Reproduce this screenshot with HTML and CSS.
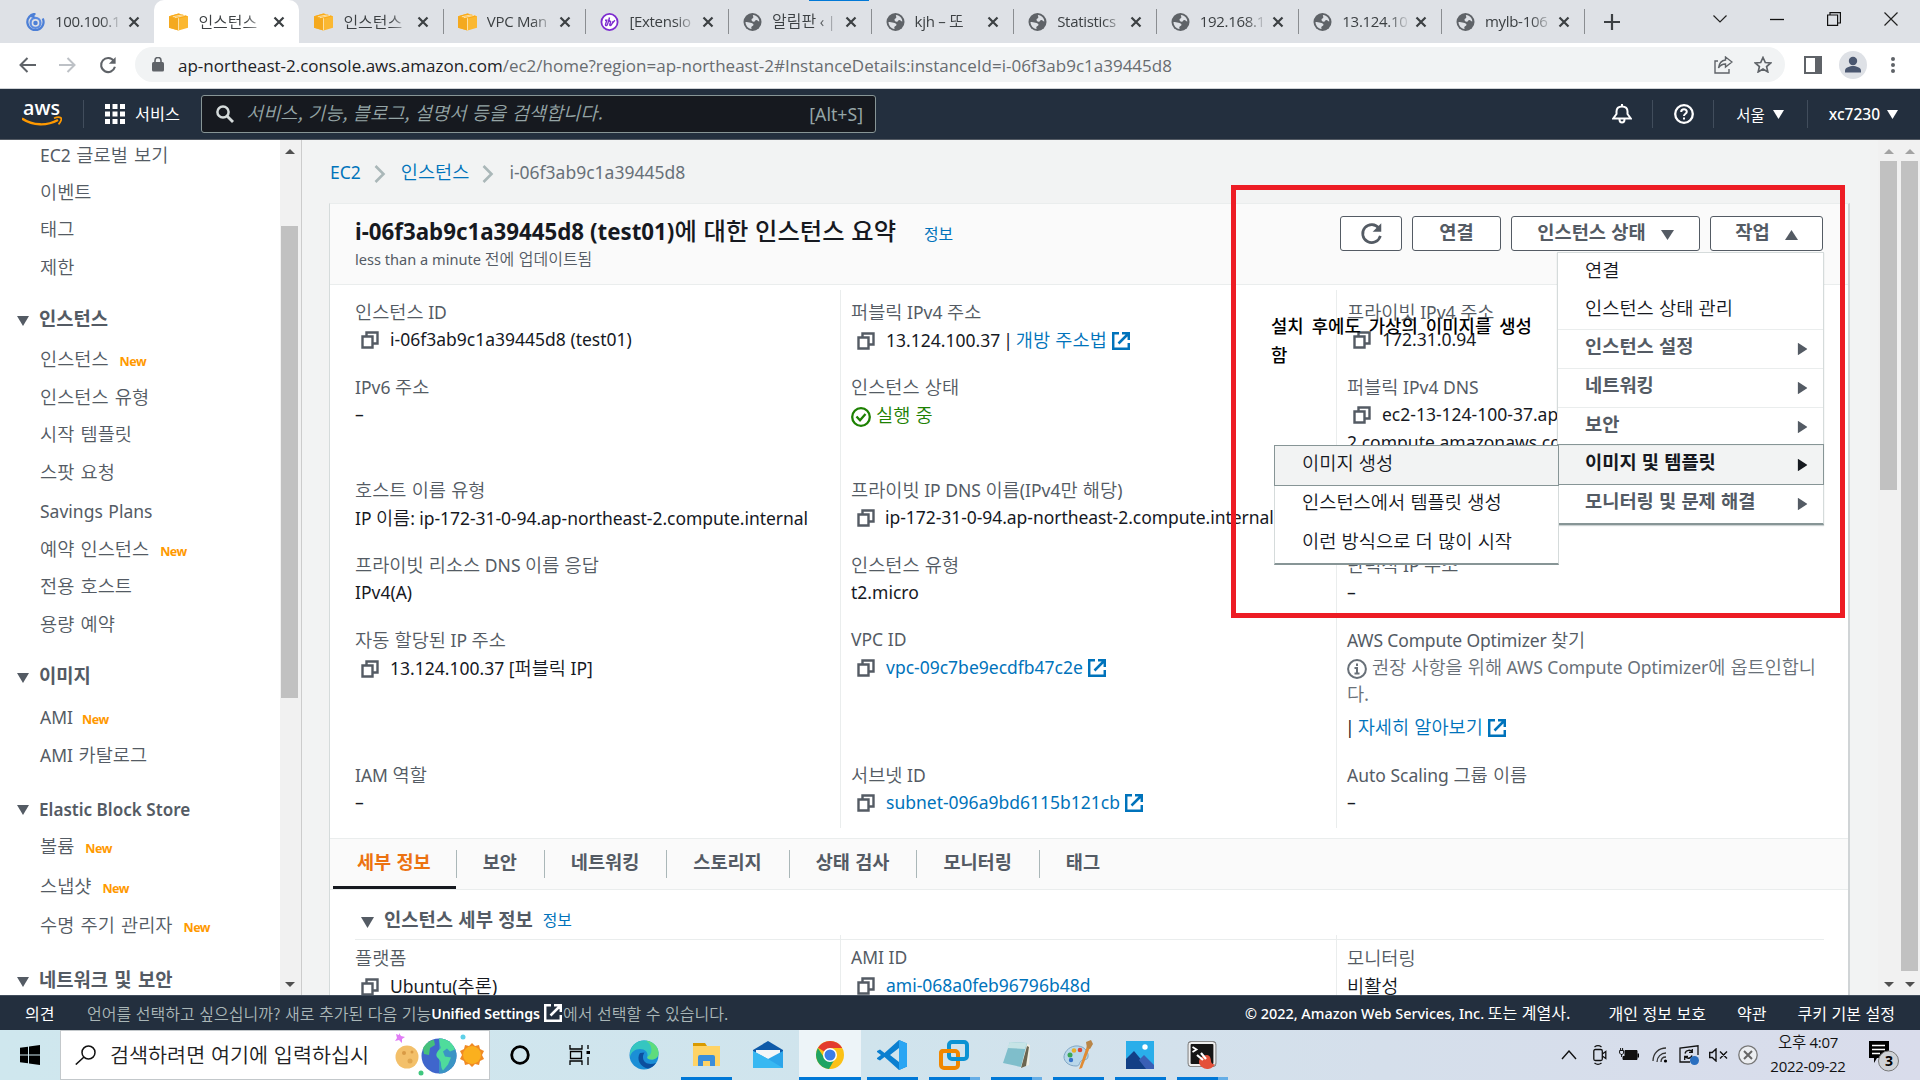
FILE: index.html
```html
<!DOCTYPE html>
<html lang="ko">
<head>
<meta charset="utf-8">
<title>인스턴스 세부 정보 | EC2 Management Console</title>
<link rel="stylesheet" href="styles.css">
</head>
<body>
<svg class="defs" width="0" height="0">
  <symbol id="copy" viewBox="0 0 18 18"><path d="M1.5 5.5h10v11h-10z M5.5 5V1.5h11v11H12" fill="none" stroke="currentColor" stroke-width="2.4"/></symbol>
  <symbol id="ext" viewBox="0 0 18 18"><path d="M7 1.2H1.2v15.6h15.6V11 M10 1.2h6.8V8 M16.5 1.5L6.5 11.5" fill="none" stroke="currentColor" stroke-width="2.5"/></symbol>
  <symbol id="close" viewBox="0 0 12 12"><path d="M1.5 1.5l9 9M10.5 1.5l-9 9" stroke="currentColor" stroke-width="2.2"/></symbol>
  <symbol id="cube" viewBox="0 0 20 18"><path d="M0 3L10 0l10 3v12l-10 3L0 15z" fill="#fbb832"/><path d="M0 3l10 2v13L0 15z" fill="#f4a91f"/><path d="M0 3l10-3 10 3-10 2.5z" fill="#fbab18"/><path d="M10 5v13M4 3.500l10-2M6 4.500l11-2.500" stroke="#fde3ab" stroke-width="1"/></symbol>
  <symbol id="globe" viewBox="0 0 18 18"><circle cx="9" cy="9" r="9" fill="#5f6368"/><path d="M9.500 2c4 .5 6.300 3.500 6.300 6.500-1.500 0-1.500-1.500-3-1.500s-1 1.800-2.600 1.800S8 7.500 8 6.500s1.500-.8 1.800-2S9 3 9.500 2zM2 9c1.500 0 3.500.2 5 .8s3 .5 3 2-2 1.200-2.200 2.400.7 1.500.2 1.800C4.500 15.500 2 12.500 2 9z" fill="#dee1e6"/></symbol>
  <symbol id="down" viewBox="0 0 12 10" preserveAspectRatio="none"><path d="M0 0h12L6 10z" fill="currentColor"/></symbol>
  <symbol id="reload" viewBox="0 0 20 20"><path d="M16.500 5.500A7.800 7.800 0 1 0 17.700 12" fill="none" stroke="currentColor" stroke-width="2.3"/><path d="M18.500 1v7.500H11z" fill="currentColor"/></symbol>
  <symbol id="chev" viewBox="0 0 12 18"><path d="M1.500 1L9.500 9l-8 8" fill="none" stroke="#aab7b8" stroke-width="2.600"/></symbol>
</svg>

<div class="tabstrip">
  <div class="tab"><svg class="fav" viewBox="0 0 20 20"><path d="M10 1a9 9 0 1 0 8 5" fill="none" stroke="#4c7fd6" stroke-width="2.500"/><circle cx="10" cy="11" r="5.500" fill="none" stroke="#5b8be0" stroke-width="2.500"/><circle cx="10" cy="11" r="2.500" fill="#4c7fd6"/><path d="M3 4l6-3v5z" fill="#4c7fd6"/></svg><span class="tt">100.100.1</span><svg class="x"><use href="#close"/></svg></div>
  <div class="tab on"><svg class="fav"><use href="#cube"/></svg><span class="tt k">인스턴스</span><svg class="x"><use href="#close"/></svg></div>
  <div class="tab"><svg class="fav"><use href="#cube"/></svg><span class="tt k">인스턴스</span><svg class="x"><use href="#close"/></svg></div>
  <div class="tab s"><svg class="fav"><use href="#cube"/></svg><span class="tt">VPC Man</span><svg class="x"><use href="#close"/></svg></div>
  <div class="tab s"><svg class="fav" viewBox="0 0 20 20"><circle cx="10" cy="10" r="9" fill="#fff" stroke="#7d2ccf" stroke-width="2"/><path d="M5 8l2 0-1.500 5c0 2 2 1 2.500-1l2-7-1 5c1-2 3-1 2 1s-1 3 0 3 2-2 3-5M11 14l5-6" fill="none" stroke="#7d2ccf" stroke-width="1.500"/></svg><span class="tt">[Extensio</span><svg class="x"><use href="#close"/></svg></div>
  <div class="tab s"><svg class="fav"><use href="#globe"/></svg><span class="tt"><span class="k">알림판</span> ‹ |</span><svg class="x"><use href="#close"/></svg></div>
  <div class="tab s"><svg class="fav"><use href="#globe"/></svg><span class="tt">kjh – <span class="k">또</span></span><svg class="x"><use href="#close"/></svg></div>
  <div class="tab s"><svg class="fav"><use href="#globe"/></svg><span class="tt">Statistics</span><svg class="x"><use href="#close"/></svg></div>
  <div class="tab s"><svg class="fav"><use href="#globe"/></svg><span class="tt">192.168.1</span><svg class="x"><use href="#close"/></svg></div>
  <div class="tab s"><svg class="fav"><use href="#globe"/></svg><span class="tt">13.124.10</span><svg class="x"><use href="#close"/></svg></div>
  <div class="tab s"><svg class="fav"><use href="#globe"/></svg><span class="tt">mylb-106</span><svg class="x"><use href="#close"/></svg></div>
  <div class="newtab s"><svg width="16" height="16" viewBox="0 0 16 16"><path d="M8 0v16M0 8h16" stroke="#3c4043" stroke-width="2.200"/></svg></div>
  <div class="winbtns">
    <svg width="14" height="8" viewBox="0 0 14 8"><path d="M.5.5L7 7 13.500.5" fill="none" stroke="#222" stroke-width="1.200"/></svg>
    <svg width="14" height="8" viewBox="0 0 14 8"><path d="M0 4.500h14" stroke="#111" stroke-width="1.300"/></svg>
    <svg width="14" height="14" viewBox="0 0 14 14"><path d="M.6 3h10v10.400H.6zM3 3V.6h10.400V11h-2.600" fill="none" stroke="#111" stroke-width="1.200"/></svg>
    <svg width="14" height="14" viewBox="0 0 14 14"><path d="M.5.5l13 13M13.500.5l-13 13" stroke="#222" stroke-width="1.200"/></svg>
  </div>
  <div class="drag"></div>
</div>

<div class="toolbar">
  <svg class="ti back" viewBox="0 0 17 16"><path d="M17 8H2M8.500 1L1.500 8l7 7" fill="none" stroke="#5f6368" stroke-width="2"/></svg>
  <svg class="ti fwd" viewBox="0 0 17 16"><path d="M0 8h15M8.500 1l7 7-7 7" fill="none" stroke="#bdc1c6" stroke-width="2"/></svg>
  <svg class="ti rel"><use href="#reload"/></svg>
  <div class="omni">
    <svg width="12" height="15" viewBox="0 0 12 15"><rect y="5" width="12" height="9.500" rx="1.500" fill="#5f6368"/><path d="M3 6V3.500a3 3 0 0 1 6 0V6" fill="none" stroke="#5f6368" stroke-width="1.600"/></svg>
    <span class="url">ap-northeast-2.console.aws.amazon.com<span class="path">/ec2/home?region=ap-northeast-2#InstanceDetails:instanceId=i-06f3ab9c1a39445d8</span></span>
    <svg class="share" width="19" height="18" viewBox="0 0 19 18"><path d="M4 5H1v12h14v-4M11.500 1l6.500 5-6.500 5V8C8 8 6 9.500 4.500 12 5 8 7 4.500 11.500 4z" fill="none" stroke="#5f6368" stroke-width="1.400"/></svg>
    <svg width="18" height="17" viewBox="0 0 18 17"><path d="M9 1.500l2.300 5 5.400.5-4.100 3.600 1.200 5.300L9 13.100l-4.800 2.800 1.200-5.300L1.300 7l5.400-.5z" fill="none" stroke="#5f6368" stroke-width="1.700"/></svg>
  </div>
  <svg class="panel" width="18" height="18" viewBox="0 0 18 18"><path d="M1 1h16v16H1z" fill="#fff" stroke="#5f6368" stroke-width="2"/><path d="M11 1h6v16h-6z" fill="#5f6368"/></svg>
  <svg class="avatar" width="28" height="28" viewBox="0 0 28 28"><circle cx="14" cy="14" r="14" fill="#dee1e6"/><circle cx="14" cy="10" r="4.200" fill="#4a5770"/><path d="M6 21.500v-2c0-3 5-4.500 8-4.500s8 1.500 8 4.500v2z" fill="#4a5770"/></svg>
  <svg class="dots" width="4" height="16" viewBox="0 0 4 16"><g fill="#5f6368"><circle cx="2" cy="2" r="2"/><circle cx="2" cy="8" r="2"/><circle cx="2" cy="14" r="2"/></g></svg>
</div>

<header class="aws">
  <svg class="logo" width="40" height="26" viewBox="0 0 40 26"><text x="1" y="14" textLength="37" lengthAdjust="spacingAndGlyphs" class="logotext">aws</text><path d="M0 17.500c11 7.500 25 7.500 36 1.500" fill="none" stroke="#f90" stroke-width="2.400"/><path d="M32 17.200c3-1.200 6-1 7-.2s-.3 4-2.500 6.300" fill="none" stroke="#f90" stroke-width="1.700"/></svg>
  <i class="sep s1"></i>
  <svg class="gridic" width="20" height="20" viewBox="0 0 20 20"><path d="M0 0h5v5H0zM7.500 0h5v5h-5zM15 0h5v5h-5zM0 7.500h5v5H0zM7.500 7.500h5v5h-5zM15 7.500h5v5h-5zM0 15h5v5H0zM7.500 15h5v5h-5zM15 15h5v5h-5z" fill="#fff"/></svg>
  <span class="svc k">서비스</span>
  <div class="search"><svg width="18" height="18" viewBox="0 0 18 18"><circle cx="7" cy="7" r="5.600" fill="none" stroke="#d5dbdb" stroke-width="2.500"/><path d="M11 11l6 6" stroke="#d5dbdb" stroke-width="2.800"/></svg><span class="ph k">서비스, 기능, 블로그, 설명서 등을 검색합니다.</span><span class="alt">[Alt+S]</span></div>
  <svg class="bell" width="20" height="20" viewBox="0 0 20 20"><path d="M1.200 14.500h17.600L15.500 10V7.500c0-3-2-5-5.500-5s-5.500 2-5.500 5V10zM7.500 15.500c0 4 5 4 5 0M10 0v3" fill="none" stroke="#fff" stroke-width="2"/></svg>
  <i class="sep"></i>
  <svg class="help" width="20" height="20" viewBox="0 0 20 20"><circle cx="10" cy="10" r="8.800" fill="none" stroke="#fff" stroke-width="2.300"/><path d="M7.200 8c0-3.500 5.600-3.500 5.600-.3 0 2-2.800 2-2.800 4.300M10 13.500v2" fill="none" stroke="#fff" stroke-width="2"/></svg>
  <i class="sep"></i>
  <span class="reg k">서울</span><svg class="tri"><use href="#down"/></svg>
  <i class="sep s2"></i>
  <span class="usr">xc7230</span><svg class="tri t2"><use href="#down"/></svg>
</header>

<div class="work">
  <nav class="side">
    <a>EC2 <span class="k">글로벌 보기</span></a>
    <a class="k">이벤트</a>
    <a class="k">태그</a>
    <a class="k">제한</a>
    <h4 class="k"><svg><use href="#down"/></svg>인스턴스</h4>
    <a class="t"><span class="k">인스턴스</span><em>New</em></a>
    <a class="k">인스턴스 유형</a>
    <a class="k">시작 템플릿</a>
    <a class="k">스팟 요청</a>
    <a class="lat">Savings Plans</a>
    <a class="t"><span class="k">예약 인스턴스</span><em>New</em></a>
    <a class="k">전용 호스트</a>
    <a class="k">용량 예약</a>
    <h4 class="k"><svg><use href="#down"/></svg>이미지</h4>
    <a class="t lat">AMI<em>New</em></a>
    <a>AMI <span class="k">카탈로그</span></a>
    <h4 class="lat"><svg><use href="#down"/></svg>Elastic Block Store</h4>
    <a class="t"><span class="k">볼륨</span><em>New</em></a>
    <a class="t"><span class="k">스냅샷</span><em>New</em></a>
    <a class="t"><span class="k">수명 주기 관리자</span><em>New</em></a>
    <h4 class="k end"><svg><use href="#down"/></svg>네트워크 및 보안</h4>
  </nav>
  <div class="sb sb1"><svg class="up"><use href="#down"/></svg><i></i><svg><use href="#down"/></svg></div>

  <main>
    <div class="crumbs"><a>EC2</a><svg><use href="#chev"/></svg><a class="k">인스턴스</a><svg><use href="#chev"/></svg><span>i-06f3ab9c1a39445d8</span></div>
    <section class="card">
      <div class="chead">
        <div class="ttl">
          <h1>i-06f3ab9c1a39445d8 (test01)<span class="k">에 대한 인스턴스 요약</span><a class="k">정보</a></h1>
          <p>less than a minute <span class="k">전에 업데이트됨</span></p>
        </div>
        <div class="btns">
          <div class="btn b1"><svg width="23" height="23"><use href="#reload"/></svg></div>
          <div class="btn b2 k">연결</div>
          <div class="btn b3 k">인스턴스 상태<svg class="tr"><use href="#down"/></svg></div>
          <div class="btn b4 k">작업<svg class="tr flip"><use href="#down"/></svg></div>
          <div class="menu">
            <div class="mi k">연결</div>
            <div class="mi k">인스턴스 상태 관리</div>
            <div class="mi g k">인스턴스 설정<svg><use href="#down"/></svg></div>
            <div class="mi g k">네트워킹<svg><use href="#down"/></svg></div>
            <div class="mi g k">보안<svg><use href="#down"/></svg></div>
            <div class="mi g k hot">이미지 및 템플릿<svg><use href="#down"/></svg></div>
            <div class="mi g k last">모니터링 및 문제 해결<svg><use href="#down"/></svg></div>
            <div class="sub">
              <div class="mi k hot">이미지 생성</div>
              <div class="mi k">인스턴스에서 템플릿 생성</div>
              <div class="mi k">이런 방식으로 더 많이 시작</div>
            </div>
          </div>
        </div>
      </div>
      <div class="cols">
        <div class="col">
          <dl><dt><span class="k">인스턴스</span> ID</dt><dd><svg class="cp"><use href="#copy"/></svg>i-06f3ab9c1a39445d8 (test01)</dd></dl>
          <dl><dt>IPv6 <span class="k">주소</span></dt><dd>–</dd></dl>
          <dl><dt class="k">호스트 이름 유형</dt><dd class="n1">IP <span class="k">이름</span>: ip-172-31-0-94.ap-northeast-2.compute.internal</dd></dl>
          <dl><dt><span class="k">프라이빗 리소스</span> DNS <span class="k">이름 응답</span></dt><dd>IPv4(A)</dd></dl>
          <dl><dt><span class="k">자동 할당된</span> IP <span class="k">주소</span></dt><dd><svg class="cp"><use href="#copy"/></svg>13.124.100.37 [<span class="k">퍼블릭</span> IP]</dd></dl>
          <dl><dt>IAM <span class="k">역할</span></dt><dd>–</dd></dl>
        </div>
        <div class="col">
          <dl><dt><span class="k">퍼블릭</span> IPv4 <span class="k">주소</span></dt><dd><svg class="cp"><use href="#copy"/></svg>13.124.100.37<span class="bar">|</span><a><span class="k">개방 주소법</span><svg class="ex"><use href="#ext"/></svg></a></dd></dl>
          <dl><dt class="k">인스턴스 상태</dt><dd class="run"><svg class="ok" viewBox="0 0 20 20"><circle cx="10" cy="10" r="8.800" fill="none" stroke="#1d8102" stroke-width="2.300"/><path d="M5.500 9.500l3.500 3.800L14.500 7" fill="none" stroke="#1d8102" stroke-width="2.300"/></svg><span class="k">실행 중</span></dd></dl>
          <dl><dt><span class="k">프라이빗</span> IP DNS <span class="k">이름</span>(IPv4<span class="k">만 해당</span>)</dt><dd class="n1"><svg class="cp"><use href="#copy"/></svg>ip-172-31-0-94.ap-northeast-2.compute.internal</dd></dl>
          <dl><dt class="k">인스턴스 유형</dt><dd>t2.micro</dd></dl>
          <dl><dt>VPC ID</dt><dd><svg class="cp"><use href="#copy"/></svg><a>vpc-09c7be9ecdfb47c2e<svg class="ex"><use href="#ext"/></svg></a></dd></dl>
          <dl><dt><span class="k">서브넷</span> ID</dt><dd><svg class="cp"><use href="#copy"/></svg><a>subnet-096a9bd6115b121cb<svg class="ex"><use href="#ext"/></svg></a></dd></dl>
        </div>
        <div class="col">
          <dl><dt><span class="k">프라이빗</span> IPv4 <span class="k">주소</span></dt><dd><svg class="cp"><use href="#copy"/></svg>172.31.0.94</dd></dl>
          <dl><dt><span class="k">퍼블릭</span> IPv4 DNS</dt><dd><svg class="cp"><use href="#copy"/></svg>ec2-13-124-100-37.ap-northeast-<br>2.compute.amazonaws.com</dd></dl>
          <dl></dl>
          <dl><dt><span class="k">탄력적</span> IP <span class="k">주소</span></dt><dd>–</dd></dl>
          <dl><dt class="aco">AWS Compute Optimizer <span class="k">찾기</span></dt><dd class="opt"><svg class="ok" viewBox="0 0 20 20"><circle cx="10" cy="10" r="8.900" fill="none" stroke="#687078" stroke-width="2"/><path d="M10 4.500v2.500M7.500 9H10v5M7.500 14.500h5" fill="none" stroke="#687078" stroke-width="2"/></svg><span class="k">권장 사항을 위해</span> AWS Compute Optimizer<span class="k">에 옵트인합니<br>다.</span></dd><dd class="more"><span class="bar">|</span><a><span class="k">자세히 알아보기</span><svg class="ex"><use href="#ext"/></svg></a></dd></dl>
          <dl><dt>Auto Scaling <span class="k">그룹 이름</span></dt><dd>–</dd></dl>
        </div>
      </div>
      <div class="tabs k">
        <div class="on">세부 정보</div><div>보안</div><div>네트워킹</div><div>스토리지</div><div>상태 검사</div><div>모니터링</div><div>태그</div>
      </div>
      <div class="sec k"><svg><use href="#down"/></svg><b>인스턴스 세부 정보</b><a>정보</a></div>
      <div class="cols c2">
        <div class="col"><dl><dt class="k">플랫폼</dt><dd><svg class="cp"><use href="#copy"/></svg>Ubuntu(<span class="k">추론</span>)</dd></dl></div>
        <div class="col"><dl><dt>AMI ID</dt><dd><svg class="cp"><use href="#copy"/></svg><a>ami-068a0feb96796b48d</a></dd></dl></div>
        <div class="col"><dl><dt class="k">모니터링</dt><dd class="k">비활성</dd></dl></div>
      </div>
    </section>
  </main>
  <div class="sb sb2"><svg class="up"><use href="#down"/></svg><i></i><svg><use href="#down"/></svg></div>
  <div class="sb sb3"><svg class="up"><use href="#down"/></svg><i></i><svg><use href="#down"/></svg></div>
  <div class="mark"><p>설치 후에도 가상의 이미지를 생성함</p></div>
</div>

<footer class="foot">
  <span class="w k f1">의견</span>
  <span class="msg"><span class="k">언어를 선택하고 싶으십니까? 새로 추가된 다음 기능</span><b>Unified Settings</b><svg width="18" height="18"><use href="#ext"/></svg><span class="k">에서 선택할 수 있습니다.</span></span>
  <span class="w cr">© 2022, Amazon Web Services, Inc. <span class="k">또는 계열사.</span></span>
  <span class="w k p1">개인 정보 보호</span>
  <span class="w k p2">약관</span>
  <span class="w k p3">쿠키 기본 설정</span>
</footer>

<div class="taskbar">
  <svg class="win" width="20" height="20" viewBox="0 0 20 20"><path d="M0 2.800l8-1.100v7.700H0zM9 1.500L20 0v9.400H9zM0 10.500h8v7.800l-8-1.100zM9 10.500h11V20L9 18.400z" fill="#000"/></svg>
  <div class="tsearch">
    <svg width="21" height="20" viewBox="0 0 21 20"><circle cx="13.500" cy="7.500" r="6.500" fill="none" stroke="#111" stroke-width="1.500"/><path d="M9 12L.8 19.500" stroke="#111" stroke-width="1.600"/></svg>
    <span class="k">검색하려면 여기에 입력하십시</span>
    <svg class="planets" width="90" height="44" viewBox="0 0 90 44"><circle cx="12" cy="24" r="11.500" fill="#f3c06a"/><circle cx="9" cy="20" r="2" fill="#d99a45"/><circle cx="15" cy="28" r="2.500" fill="#e0a650"/><circle cx="17" cy="19" r="1.500" fill="#d99a45"/><circle cx="44" cy="23" r="17.500" fill="#3f66cc"/><path d="M44 5.500a17.500 17.500 0 0 1 0 35z" fill="#3a94c4"/><path d="M44 5.500c9 0 14 5 16 11l-5 2-3-3-4 3 2 5 6 1-3 7-5 6c-3-4-1-7-3-10s-5-4-3-8 5-3 3-7z" fill="#4fdc9c"/><path d="M28 15c3-5 7-8 11-8l1 5-5 3-1 7-5-1z" fill="#45c07c"/><path d="M77 10l3 3 4-1 1 4 4 2-2 4 2 4-4 2-1 4-4-1-3 3-3-3-4 1-1-4-4-2 2-4-2-4 4-2 1-4 4 1z" fill="#f08a24"/><circle cx="77" cy="22" r="9" fill="#fbb01e"/><path d="M4 0l2 3 4 1-3 2v4L4 7 0 8l2-3-1-4 3 1z" fill="#e07cf5"/><circle cx="68" cy="4" r="2.500" fill="#5ed0e8"/><circle cx="26" cy="40" r="2.500" fill="#3fc77e"/></svg>
  </div>
  <svg class="cort" width="20" height="20" viewBox="0 0 20 20"><circle cx="10" cy="10" r="8.300" fill="none" stroke="#000" stroke-width="2.800"/></svg>
  <svg class="tv" width="22" height="20" viewBox="0 0 22 20"><path d="M1 0v4h12V0M1 20v-4h12v4M1.500 6.500h11v7h-11zM19 0v4M19 12v8" fill="none" stroke="#000" stroke-width="1.300"/><path d="M17.500 6h3.500v3h-3.500z"/></svg>
  <div class="apps">
    <div><svg viewBox="0 0 30 30"><circle cx="15" cy="15" r="14.500" fill="#1b8fd6"/><path d="M1 12C3 4 9 .5 15 .5c9 0 14.500 6.500 14.500 12 0 5-3.500 7-7 7-4 0-5-1.500-4-3.500C19 12 16 9 11 9c-5 0-9 3-10 8z" fill="#35c6c0"/><path d="M17 .7c8 1 12.500 6.800 12.500 12 0 5-3.500 6.800-7 6.800-3 0-4.500-1-4-2.500 6-3 5-13-1.500-16.300z" fill="#5fdc7c"/><path d="M11 13c-4 6 0 14 8 15.500 3-.5 6-2.500 8-5.500-6 2-12 1-13-5-.3-2 .5-4 1.500-5.500z" fill="#0c4f9e"/></svg></div>
    <div class="r"><svg viewBox="0 0 30 30"><path d="M2 3h12l2 3H2z" fill="#d99a00"/><path d="M2 6h27v20H2z" fill="#ffd365"/><path d="M7 26v-9q0-2 2-2h13q2 0 2 2v9h-5v-5h-7v5z" fill="#3b8edb"/></svg></div>
    <div><svg viewBox="0 0 30 30"><path d="M0 10L15 1l15 9v5H0z" fill="#0f5aa8"/><path d="M3 10h24v9H3z" fill="#f4f6f8"/><path d="M0 11l15 8 15-8v17H0z" fill="#2ca5ea"/><path d="M0 11l15 8 15 9H0z" fill="#38b8f2"/></svg></div>
    <div class="r act"><svg viewBox="0 0 30 30"><circle cx="15" cy="15" r="14" fill="#fbc116"/><path d="M15 15L3 7.800A14 14 0 0 1 27.200 8H15z" fill="#e33b2e"/><path d="M2.900 8A14 14 0 0 0 14 29l6-10.500-11-1z" fill="#1fa463"/><circle cx="15" cy="15" r="7" fill="#fff"/><circle cx="15" cy="15" r="5.500" fill="#3b7de8"/></svg></div>
    <div class="r"><svg viewBox="0 0 30 30"><path d="M22 0l8 3.500v23L22 30 7.500 17 3 20.500 0 19v-1l4-3-4-3v-1l3-1.500L7.500 13zM22 8l-9 7 9 7z" fill="#0a7fd0" fill-rule="evenodd"/><path d="M22 0l8 3.500v23L22 30z" fill="#2aa5f3"/></svg></div>
    <div class="r m"><svg viewBox="0 0 30 30"><rect x="2" y="11" width="17" height="17" rx="3" fill="none" stroke="#f08700" stroke-width="4"/><rect x="10" y="2" width="18" height="17" rx="3" fill="none" stroke="#0c93d3" stroke-width="4"/><path d="M2 14v-1q0-2 2-2h12" fill="none" stroke="#f08700" stroke-width="4"/></svg></div>
    <div class="r m"><svg viewBox="0 0 30 30"><path d="M26 4l3 1-1 20-9 3z" fill="#f0efe4"/><path d="M26 6l2 1-3 19-5 2z" fill="#6b6550"/><path d="M9 2l17 1-6 24L2 23z" fill="#7fbecb"/><path d="M9 2l17 1-2 6L6 8z" fill="#c6e4e6"/></svg></div>
    <div class="r"><svg viewBox="0 0 30 30"><path d="M12 6c8-1 14 5 13 11-1 4-5 2-7 4s-1 5-5 5C5 26 1 21 1 17S5 7 12 6z" fill="#b9d7ea" stroke="#7fa6c4"/><circle cx="7" cy="15" r="2.500" fill="#3aa655"/><circle cx="11" cy="10.500" r="2.300" fill="#e8b02a"/><circle cx="17" cy="10" r="2.300" fill="#d94a3d"/><circle cx="8" cy="20" r="2.200" fill="#3673c9"/><path d="M24 6l3 1-8 21-3 1z" fill="#e08b34"/><path d="M23 2l5-2 2 4-3 5-3-1z" fill="#b98547"/></svg></div>
    <div class="r"><svg viewBox="0 0 30 30"><path d="M1 1h28v28H1z" fill="#2aaeea"/><path d="M1 19L9 11l15 18H1z" fill="#123f85"/><path d="M14 20l5-5 10 10v4H21z" fill="#3a5fb5"/><circle cx="20" cy="7" r="2.700" fill="#fff"/></svg></div>
    <div class="r m"><svg viewBox="0 0 30 30"><rect x="1" y="1.500" width="28" height="25" rx="3" fill="#151515" stroke="#888" stroke-width="1"/><rect x="2.500" y="3" width="25" height="22" rx="2" fill="none" stroke="#eee" stroke-width="2.200"/><path d="M5.500 7l4 2.500-4 2.500" fill="none" stroke="#fff" stroke-width="1.800"/><path d="M12 22c0-4 4-7 8-7 3 0 4 4 4 6s2 4 4 3c-2 4-5 5-8 5s-8-3-8-7z" fill="#e4513a"/><path d="M10 15l6 5M14 13l5 6" stroke="#fff" stroke-width="2.200"/></svg></div>
  </div>
  <div class="tray">
    <svg class="y0" width="16" height="10" viewBox="0 0 16 10"><path d="M1 9l7-8 7 8" fill="none" stroke="#111" stroke-width="1.400"/></svg>
    <svg class="y1" width="14" height="20" viewBox="0 0 14 20"><rect x=".8" y="4.500" width="8.500" height="11" rx="1.500" fill="none" stroke="#111" stroke-width="1.300"/><path d="M9.300 9L12.800 6.500v7L9.300 11M1.500 2c2-1.500 5-1.500 7 0M1.500 18c2 1.500 5 1.500 7 0" fill="none" stroke="#111" stroke-width="1.300"/></svg>
    <svg class="y2" width="20" height="14" viewBox="0 0 20 14"><path d="M6 2.500h12v9H4V8.500h2z" fill="#111" stroke="#111"/><path d="M18.500 5.500H20v4h-1.500z"/><path d="M.6 2.500h4V5L3.300 6.500H1.900L.6 5zM1.600 0v2.500M3.600 0v2.500M2.600 6.500V9" fill="none" stroke="#111" stroke-width="1"/></svg>
    <svg class="y3" width="16" height="16" viewBox="0 0 16 16"><path d="M1 14C1 6 7 1 14 1M5 15c0-5 4-9 9-9M9 15c0-3 2-5 5-5" fill="none" stroke="#333" stroke-width="1.300"/><circle cx="13.500" cy="14" r="1.600"/></svg>
    <svg class="y4" width="20" height="20" viewBox="0 0 20 20"><path d="M19 10V.8L1 3v14h10" fill="none" stroke="#111" stroke-width="1.300"/><path d="M6 8.500c1-4 6-4 7-1.500M13.300 4v3.300H10M13 10.500c-1 3.500-5.500 3.500-7 1M5.700 15v-3.500H9" fill="none" stroke="#111" stroke-width="1.300"/><circle cx="15.500" cy="15.500" r="4.500" fill="#2a6fc0"/></svg>
    <svg class="y5" width="19" height="14" viewBox="0 0 19 14"><path d="M.7 4.500h2.500L7 1v12L3.200 9.500H.7zM11 3.500l7 7M18 3.500l-7 7" fill="none" stroke="#111" stroke-width="1.400"/></svg>
    <svg class="y6" width="20" height="20" viewBox="0 0 20 20"><circle cx="10" cy="10" r="9.200" fill="#eceef1" stroke="#777" stroke-width="1.300"/><path d="M6 6l8 8M14 6l-8 8" stroke="#666" stroke-width="2"/></svg>
    <div class="clock"><span><span class="k">오후</span> 4:07</span><span>2022-09-22</span></div>
    <svg class="y7" width="31" height="31" viewBox="0 0 31 31"><path d="M0 0h20v17H8l-3 5v-5H0z"/><path d="M3 4.500h13M3 8.500h13M3 12.500h8" stroke="#fff" stroke-width="1.300"/><circle cx="19.500" cy="20" r="10" fill="#cfd2d6" stroke="#777"/><text x="16" y="25" class="cnt">3</text></svg>
  </div>
</div>
</body>
</html>
```
FILE: styles.css
```css
* { box-sizing: border-box; }
body { margin: 0; width: 1920px; height: 1080px; overflow: hidden; display: flex; flex-direction: column; font: 17.5px/28px "Noto Sans", "Noto Sans CJK KR", sans-serif; color: #16191f; background: #fff; }
.k { font-family: "Noto Sans CJK KR", "Noto Sans", sans-serif; font-size: 18.65px; font-weight: 350; line-height: inherit; }
svg { flex: none; }
.defs { position: absolute; }
a { color: #0073bb; }
h1, h4, p, dl, dt, dd { margin: 0; }

.tabstrip { height: 43px; flex: none; background: #dee1e6; display: flex; padding-left: 11px; position: relative; font-family: "Open Sans", "Noto Sans CJK KR", sans-serif; font-size: 15px; }
.tab { width: 143.4px; padding: 0 14px 0 15px; display: flex; align-items: center; position: relative; color: #3c4043; }
.tab .fav { width: 19px; height: 18px; }
.tab .x { width: 12px; height: 12px; color: #3c4043; }
.tab .tt { flex: 1; margin: -2px 3px 0 10px; white-space: nowrap; letter-spacing: -.3px; -webkit-mask-image: linear-gradient(90deg, #000 65%, transparent 98%); mask-image: linear-gradient(90deg, #000 65%, transparent 98%); }
.tab .k { font-size: 16px; letter-spacing: 0; }
.tab.on { background: #fff; border-radius: 10px 10px 0 0; width: 145px; }
.s::before { content: ""; position: absolute; left: 0; top: 9px; width: 1px; height: 25px; background: #8a8d91; }
.tab.s { width: 142.6px; }
.newtab { width: 60px; position: relative; display: flex; align-items: center; padding-left: 20px; }
.winbtns { margin-left: auto; display: flex; gap: 43px; align-items: center; padding: 0 22px 6px 0; }
.drag { position: absolute; left: 809px; top: 0; width: 60px; height: 1px; background: #0078d7; }

.toolbar { height: 46px; flex: none; display: flex; align-items: center; padding: 0 23px 2px 19px; border-bottom: 1px solid #cfd2d6; }
.ti { width: 17px; height: 16px; color: #5f6368; }
.fwd { margin-left: 23px; }
.rel { width: 18px; height: 18px; margin-left: 23px; }
.omni { margin-left: 18px; width: 1650px; flex: none; height: 35px; border-radius: 18px; background: #f1f3f4; display: flex; align-items: center; padding: 0 13px 0 17px; margin-right: 19px; }
.url { font-family: "Open Sans", sans-serif; font-size: 17px; margin: 2px auto 0 14px; color: #202124; white-space: nowrap; }
.url .path { color: #686c70; }
.share { margin-right: 21px; }
.avatar { margin-left: 17px; }
.dots { margin-left: 24px; }

.aws { height: 51px; flex: none; background: #232f3e; border-bottom: 1px solid #545b64; display: flex; align-items: center; padding-left: 22px; color: #fff; font-size: 15.500px; }
.logotext { font: 600 20px "Open Sans", sans-serif; fill: #fff; }
.sep { width: 1px; height: 28px; background: #414d5c; margin: 0 20px; }
.s1 { margin: 0 21px; }
.aws .svc { font-size: 16.300px; font-weight: 400; margin-left: 10px; width: 66px; margin-top: -2px; }
.search { width: 675px; height: 38px; border: 1px solid #879596; border-radius: 3px; background: #16191f; display: flex; align-items: center; padding: 0 12px 0 14px; color: #95a5a6; }
.ph { font-style: italic; margin: -4px auto 0 12px; word-spacing: .3px; }
.alt { font-size: 17.700px; }
.bell { margin-left: auto; }
.help { position: relative; left: 1px; }
.aws .reg { font-size: 15.500px; font-weight: 400; margin-left: 2px; }
.tri { width: 11px; height: 9px; margin-left: 8px; }
.s2 { margin-left: 23px; }
.usr { font-weight: 500; margin-left: 1px; }
.t2 { margin-left: 7px; margin-right: 22px; }

.work { height: 855px; flex: none; display: flex; position: relative; overflow: hidden; }
.side { width: 280px; flex: none; color: #545b64; margin-top: -5px; word-spacing: 1px; }
.side a { display: flex; align-items: baseline; height: 37.5px; line-height: 37.5px; color: #545b64; padding-left: 40px; white-space: pre; }
.side a.k { line-height: 36px; }
.side a.t { height: 39.5px; line-height: 39.5px; }
.side a.lat { padding-top: 3px; }
.side em { font: 700 12.500px/20px "Noto Sans", sans-serif; color: #f90; margin-left: 11px; letter-spacing: -.5px; }
.side a.lat em { margin-left: 9px; }
.side h4 { height: 38px; line-height: 38px; margin-top: 15px; font-weight: 600; font-size: 17.100px; display: flex; align-items: center; padding-left: 17px; }
.side h4.k { font-size: 18.800px; padding-bottom: 2px; }
.side h4.end { padding-bottom: 0; padding-top: 3px; }
.side h4.lat { padding-top: 8px; word-spacing: 0; }
.side h4 svg { width: 12px; height: 10px; margin: 6px 10px 0 0; }
.side h4.lat svg { margin-top: 0; }

.sb { flex: none; background: #f1f1f1; display: flex; flex-direction: column; align-items: center; color: #505050; padding: 9px 0 8px; }
.sb svg { width: 10px; height: 5px; }
.sb .up { transform: scaleY(-1); }
.sb i { width: 17px; background: #c1c1c1; margin-bottom: auto; }
.sb1 { width: 22px; padding-right: 2px; border-right: 1px solid #ccc; }
.sb1 i { margin-top: 72px; height: 472px; }
.sb2 { width: 21px; } .sb2 i { margin-top: 7px; height: 329px; }
.sb3 { width: 21px; } .sb3 i { margin-top: 7px; height: 810px; }
.sb2 .up, .sb3 .up { color: #a3a3a3; }

main { flex: 1; background: #f2f3f3; padding: 17px 28px 0 27px; min-width: 0; }
.crumbs { height: 46px; display: flex; align-items: flex-start; color: #687078; line-height: 30px; padding-left: 1px; }
.crumbs svg { width: 12px; height: 18px; margin: 8px 15px 0 13px; }
.crumbs a.k { margin-top: -1px; }
.card { background: #fff; border: 1px solid #eaeded; border-left-color: #d5dbdb; border-right: 2px solid #d0d4d6; height: 900px; }
.chead { height: 81px; background: #fafafa; border-bottom: 1px solid #eaeded; display: flex; justify-content: space-between; padding: 12px 25px 0 25px; }
.ttl { margin-top: -2px; }
h1 { font-size: 22.300px; line-height: 32px; font-weight: 700; white-space: nowrap; }
h1 .k { font-size: 24.300px; font-weight: 500; }
h1 a.k { font-size: 15.900px; font-weight: 400; margin-left: 28px; }
.ttl p { font-size: 14.600px; line-height: 20px; color: #545b64; margin-top: -2px; }
.ttl p .k { font-size: 16px; }
.btns { display: flex; gap: 10px; position: relative; height: 35px; }
.btn { border: 1px solid #545b64; border-radius: 3px; background: #fff; color: #545b64; display: flex; align-items: center; justify-content: center; padding-bottom: 6px; }
.btn.k { font-weight: 600; font-size: 18.700px; }
.btn svg { margin-top: 6px; }
.tr { width: 13px; height: 10px; margin-left: 15px; position: relative; top: 1px; }
.flip { transform: scaleY(-1); }
.b1 { width: 62px; } .b2 { width: 89px; } .b3 { width: 189px; } .b4 { width: 113px; }
.menu { position: absolute; z-index: 3; right: -1px; top: 36px; width: 267px; height: 273px; background: #fff; border: 1px solid #d5dbdb; border-bottom: 2px solid #879596; box-shadow: 0 1px 1px rgba(0,28,36,.2); }
.mi { height: 39px; line-height: 30px; padding-left: 27px; color: #16191f; font-size: 18.700px; white-space: nowrap; display: flex; border-top: 1px solid transparent; }
.menu > .mi:first-child, .menu > .mi:nth-child(2) { height: 38px; line-height: 29px; }
.mi.g { height: 38.800px; border-top-color: #eaeded; color: #545b64; font-weight: 600; justify-content: space-between; align-items: flex-start; padding-right: 14px; }
.mi.g svg { width: 13px; height: 10px; transform: rotate(-90deg); margin-top: 14px; }
.mi.hot { background: #f2f3f3; outline: 1px solid #879596; }
.mi.g.hot { color: #16191f; }
.sub { position: absolute; right: 264px; top: 192px; width: 285px; height: 120px; background: #fff; border: 1px solid #d5dbdb; border-bottom: 2px solid #879596; }

.cols { display: grid; grid-template-columns: 510px 496px 1fr; padding-top: 5px; height: 553px; }
.col { height: 538px; padding: 7px 0 0 10px; border-left: 1px solid #eaeded; display: grid; grid-template-rows: 75px 103px 75px 75px 135px 67px; align-content: start; }
.col:first-child { border-left: 0; padding-left: 25px; }
dl { white-space: nowrap; min-width: 0; }
dt { height: 28px; color: #545b64; }
dd { height: 26px; }
dt, dd { line-height: 28px; }
.cp { width: 18px; height: 18px; margin: 0 11px 0 6px; vertical-align: -3px; color: #545b64; }
.n1 { letter-spacing: -.05px; }
.n1 .cp { margin-right: 10px; }
.ex { width: 18px; height: 18px; margin-left: 5px; vertical-align: -3px; }
.bar { margin: 0 3px; }
.more .bar { margin-left: -2px; }
.ok { width: 20px; height: 20px; margin-right: 5px; vertical-align: -5px; }
.run { color: #1d8102; line-height: 27px; }
.aco { letter-spacing: -.15px; }
.opt { color: #687078; height: 59px; line-height: 26px; letter-spacing: -.05px; }
.tabs { height: 52px; border-top: 1px solid #eaeded; border-bottom: 1px solid #eaeded; background: #fafafa; display: flex; padding-left: 3px; color: #545b64; }
.tabs div { font-weight: 600; font-size: 18.600px; padding: 0 27px; line-height: 43px; position: relative; }
.tabs .on { color: #ec7211; border-bottom: 3px solid #16191f; padding: 0 25px 0 24px; }
.tabs div + div::before { content: ""; position: absolute; left: 0; top: 11px; width: 1px; height: 28px; background: #aab7b8; }
.sec { height: 50px; margin: 0 24px 0 25px; border-bottom: 1px solid #eaeded; display: flex; align-items: center; padding: 9px 0 0 6px; color: #545b64; }
.sec svg { width: 13px; height: 11px; margin-right: 10px; position: relative; top: 3px; }
.sec b { font-weight: 600; margin-right: 10px; font-size: 18.800px; }
.sec a { font-size: 15.900px; font-weight: 400; margin-top: 2px; }
.c2 { padding: 0; margin-top: -5px; }
.c2 .col { padding-top: 8px; }

.mark { position: absolute; z-index: 5; left: 1231px; top: 45px; width: 614px; height: 433px; border: 5px solid #ed1c24; padding: 121px 0 0 35px; }
.mark p { width: 268px; font: 500 17.800px/29px "Noto Sans CJK KR", sans-serif; color: #000; word-spacing: 3px; word-break: break-all; }

.foot { height: 35px; flex: none; background: #232f3e; border-top: 1px solid #414d5c; display: flex; align-items: center; padding-left: 25px; color: #aab7b8; font-size: 14.400px; line-height: 33px; white-space: nowrap; }
.foot .k { font-size: 16.050px; line-height: 31px; }
.foot .w { color: #fff; font-weight: 500; }
.foot .w.k, .foot .w .k { font-weight: 400; }
.f1 { width: 62px; }
.msg { display: flex; align-items: center; }
.msg b { color: #fff; font-weight: 600; font-size: 14.200px; letter-spacing: -.1px; }
.msg svg { color: #fff; margin: 0 1px 0 4px; }
.cr { margin-left: auto; }
.p1 { margin-left: 38px; } .p2 { margin-left: 31px; } .p3 { margin: 0 25px 0 31px; }

.taskbar { height: 50px; flex: none; display: flex; align-items: center; padding-left: 20px; background: linear-gradient(90deg, #cfe7ee 0, #d0e4ed 45%, #d5dfeb 72%, #d9dceb 100%); font-family: "Open Sans", "Noto Sans CJK KR", sans-serif; color: #111; }
.tsearch { margin-left: 20px; width: 430px; height: 50px; background: #fff; border: 1px solid #c3c8cb; display: flex; align-items: center; padding-left: 14px; white-space: nowrap; }
.tsearch .k { font-size: 20.700px; margin: -3px auto 0 14px; color: #222; }
.planets { margin-right: 4px; }
.cort { margin-left: 20px; }
.tv { margin-left: 39px; }
.apps { display: flex; margin-left: 22px; height: 50px; }
.apps div { width: 62px; display: flex; align-items: center; justify-content: center; position: relative; }
.apps svg { width: 30px; height: 30px; }
.apps .r::after { content: ""; position: absolute; left: 6px; right: 5px; bottom: 0; height: 3px; background: #0078d7; }
.apps .m::after { background: linear-gradient(90deg, #0078d7 80%, #66aee6 80%); }
.apps .act { background: #edf4f8; }
.apps .act::after { left: 0; right: 0; }
.tray { margin-left: auto; display: flex; align-items: center; padding-right: 20px; }
.y1 { margin-left: 16px; } .y2 { margin-left: 12px; } .y3 { margin-left: 13px; } .y4 { margin-left: 11px; } .y5 { margin-left: 10px; } .y6 { margin-left: 10px; }
.clock { width: 100px; font-size: 15px; line-height: 24px; display: flex; flex-direction: column; align-items: center; letter-spacing: -.3px; margin-top: -4px; }
.clock .k { font-size: 15.500px; }
.y7 { margin: 2px 0 0 11px; }
.cnt { font: 700 14px "Open Sans", sans-serif; }
```
